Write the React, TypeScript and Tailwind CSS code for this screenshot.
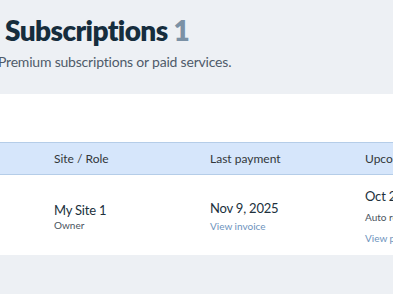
import React from 'react'

const font = { fontFamily: 'Lato, "Noto Sans", sans-serif' }

export default function App() {
  return (
    <div className="h-[294px] w-[393px] overflow-hidden bg-[#edf0f4]" style={font}>
      <div className="pt-[12px] pl-[5px]">
        <h1 className="text-[28px] font-extrabold leading-[36px] tracking-[-0.6px] text-[#162d3d] whitespace-nowrap">
          Subscriptions <span className="text-[#7b91a5]">1</span>
        </h1>
      </div>
      <p className="ml-[-2px] mt-[5px] text-[14px] leading-[18px] tracking-[-0.2px] text-[#4f5b6a] whitespace-nowrap">
        Premium subscriptions or paid services.
      </p>

      <div className="mt-[23px] bg-white">
        <div className="h-[48px]" />
        <div className="flex h-[33px] items-center border-y border-[#b5cde8] bg-[#d6e6fb] pl-[54px] text-[12px] text-[#32363a] whitespace-nowrap">
          <div className="w-[156px] shrink-0">Site / Role</div>
          <div className="w-[155px] shrink-0">Last payment</div>
          <div className="shrink-0">Upcoming payment</div>
        </div>
        <div className="flex h-[80px] items-center pl-[54px] whitespace-nowrap">
          <div className="w-[156px] shrink-0 pt-[4px]">
            <div className="text-[13px] leading-[17px] tracking-[-0.2px] text-[#20303c]">My Site 1</div>
            <div className="text-[10px] leading-[13px] text-[#4a5460]">Owner</div>
          </div>
          <div className="w-[155px] shrink-0 pt-[2px]">
            <div className="text-[13px] leading-[18px] tracking-[-0.2px] text-[#20303c]">Nov 9, 2025</div>
            <div className="mt-[2px] text-[10px] leading-[14px] text-[#6d93bd]">View invoice</div>
          </div>
          <div className="shrink-0 pt-[2px]">
            <div className="text-[13px] leading-[18px] tracking-[-0.2px] text-[#20303c]">Oct 20, 2026</div>
            <div className="mt-[4px] text-[10px] leading-[16px] text-[#4a5460]">Auto renewal on</div>
            <div className="mt-[6px] text-[10px] leading-[14px] text-[#6d93bd]">View plan</div>
          </div>
        </div>
      </div>
    </div>
  )
}
